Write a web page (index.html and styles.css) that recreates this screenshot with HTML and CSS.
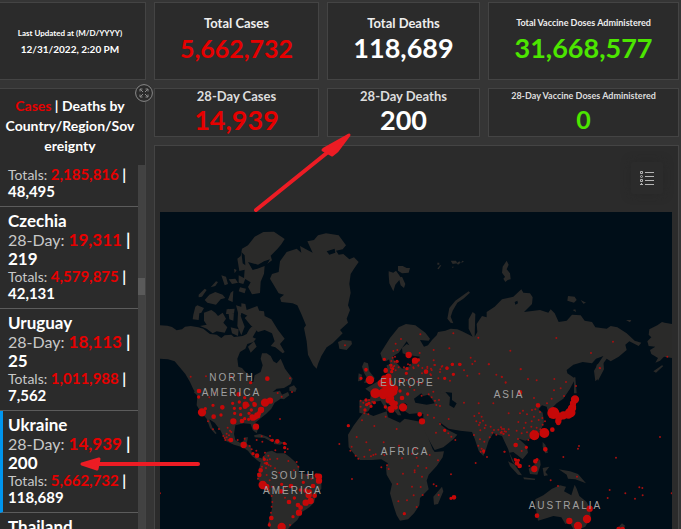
FILE: index.html
```html
<!DOCTYPE html>
<html lang="en">
<head>
<meta charset="utf-8">
<meta name="viewport" content="width=device-width, initial-scale=1">
<title>COVID-19 Dashboard</title>
<link rel="stylesheet" href="styles.css">
</head>
<body>
<main class="dashboard">
  <section class="panel updated">
    <p class="updated-label">Last Updated at (M/D/YYYY)</p>
    <p class="updated-time">12/31/2022, 2:20 PM</p>
  </section>
  <section class="panel stat">
    <h2 class="stat-label">Total Cases</h2>
    <p class="stat-value medium cases">5,662,732</p>
  </section>
  <section class="panel stat">
    <h2 class="stat-label">Total Deaths</h2>
    <p class="stat-value">118,689</p>
  </section>
  <section class="panel stat">
    <h2 class="stat-label small">Total Vaccine Doses Administered</h2>
    <p class="stat-value doses">31,668,577</p>
  </section>

  <section class="panel countries">
    <button class="expand" type="button" aria-label="Expand">
      <svg viewBox="0 0 18 18" width="18" height="18" fill="none" stroke="#8a8a8a"><circle cx="9" cy="9" r="8.4"/><path d="M5 7.500V5h2.500M5 5l3 3M10.500 5H13v2.500M13 5l-3 3M5 10.500V13h2.500M5 13l3-3M10.500 13H13v-2.500M13 13l-3-3"/></svg>
    </button>
    <h2 class="countries-title"><span class="cases">Cases</span> | Deaths by<br>Country/Region/Sov<br>ereignty</h2>
    <div class="list-area">
      <ul class="list">
        <li class="country partial"><p class="totals">Totals: <b class="cases">2,185,816</b> <b>| 48,495</b></p></li>
        <li class="country"><h3>Czechia</h3><p class="recent">28-Day: <b class="cases">19,311</b> <b>| 219</b></p><p class="totals">Totals: <b class="cases">4,579,875</b> <b>| 42,131</b></p></li>
        <li class="country"><h3>Uruguay</h3><p class="recent">28-Day: <b class="cases">18,113</b> <b>| 25</b></p><p class="totals">Totals: <b class="cases">1,011,988</b> <b>| 7,562</b></p></li>
        <li class="country selected"><h3>Ukraine</h3><p class="recent">28-Day: <b class="cases">14,939</b> <b>| 200</b></p><p class="totals">Totals: <b class="cases">5,662,732</b> <b>| 118,689</b></p></li>
        <li class="country"><h3>Thailand</h3></li>
      </ul>
      <div class="track"><div class="thumb"></div></div>
    </div>
  </section>

  <section class="panel stat compact">
    <h2 class="stat-label">28-Day Cases</h2>
    <p class="stat-value cases">14,939</p>
  </section>
  <section class="panel stat compact">
    <h2 class="stat-label">28-Day Deaths</h2>
    <p class="stat-value">200</p>
  </section>
  <section class="panel stat compact">
    <h2 class="stat-label small">28-Day Vaccine Doses Administered</h2>
    <p class="stat-value medium doses">0</p>
  </section>

  <section class="panel map-panel">
    <div class="map-tools">
      <button class="legend" type="button" aria-label="Legend">
        <svg viewBox="0 0 16 16" width="16" height="16" fill="none" stroke="#b4b4b4"><path d="M6 2.500h9M6 6.500h9M6 10.500h9M6 14.500h9"/><path d="M1.500 1.500h2v2h-2zM1.500 9.500h2v2h-2z"/><circle cx="2.500" cy="6.500" r="1"/><path d="M2.500 13v1M1 14.500h3"/></svg>
      </button>
    </div>
    <svg class="map" viewBox="0 0 1536 951" preserveAspectRatio="xMidYMin slice" role="img" aria-label="World map of cases">
      <g class="land">
        <!-- North America -->
        <path d="M0 340L22 341 36 345 50 355 66 352 75 344 92 342 115 346 130 350 142 360 150 366 170 368 184 378 194 370 214 368 222 375 248 372 260 366 268 352 274 345 284 342 289 356 278 376 288 380 280 390 262 396 256 410 240 420 232 440 235 464 246 468 256 480 270 490 272 508 280 510 284 490 302 480 308 460 302 440 306 424 320 424 332 432 340 448 350 454 362 440 370 458 375 470 385 484 398 500 392 516 372 528 350 530 338 540 360 536 366 548 384 540 388 550 372 562 362 560 344 572 334 590 318 606 300 620 286 632 294 650 290 664 278 654 272 636 250 634 226 640 222 666 226 684 240 692 250 688 254 676 264 676 260 696 272 702 276 728 290 736 304 738 312 752 298 750 288 742 276 732 264 716 248 706 222 698 196 686 182 656 164 632 148 622 158 648 170 664 166 666 150 648 140 620 122 600 110 580 112 552 100 532 90 510 76 486 66 474 44 448 24 442 0 440z"/>
        <path d="M106 534l12 8-4 8-12-8zM388 526l14-6 8 10-4 10-18-4z"/>
        <!-- Arctic islands -->
        <path d="M106 284l6-4 20 8-8 14-6 2-2 20-18-2 2-14zM132 302l22-8 12 8 8 10 14-10 10 18-8 12 12 14-8 16-24-4-12 6-18-14-20-8 20-4-8-12zM134 264l14-16 18-8 22 8 8 10-14 4-14 16-26-6zM116 248l18-18 6 4-14 20-10 2zM152 226l16-18 6 2-8 12zM184 190l14 4 6 22-10 4zM206 202l20-2 8 12-18 4zM212 242l8-6-2 34-14-6zM200 292l24-2-2 14-24 2zM204 290l18 10-2 26-12-4zM228 280l20 6-6 26 12 32-10 26-12-28 2-40zM244 274l12 2 4 18 32-12 8 20-36 10-20-10zM254 318l26-24 32 4 2 14 20 10 20 32 20 26-14 16 14 24-6 4-22-18-14-4 12-14-8-24-22-10-20 6-22-20zM212 346l24 6-2 20-18-8zM264 404l18-16 8 16-18 18z"/>
        <path d="M232 140l10-8 4-22 18-10 20-26 26-14 32-1 32 22-10 16-12 14-20 20 4 14-22 16-2 24-10 24-2 34-24 4-12-22 8-14-20-12 2-26-16 4zM236 190l20 10-6 16-14-4zM240 226l18 4-4 14-18-6zM222 170l8 4-6 10z"/>
        <!-- Greenland -->
        <path d="M330 200l6-14 20-6 4-32 20-28 30-10 14 12-4-20 18 10 20 10-16-34 20-4 12-14 24-6 38 6 22 30-10 12-20 4 8 12 14-2 18 16 14-6 14 14-14 20-10 16-4 30 4 26-8 38 6 14-10 26 4 12-24 22 8 10-30 30-18 12-16 26-10 24-4 14-10-10-16-32-4-40-8-40 6-8-14-34-12-26-14-6-34-4-4-12 12-10-16-4z"/>
        <path d="M534 390l14-6 26 2 2 10-16 18-22-4-2-12z"/>
        <!-- Caribbean -->
        <path d="M282 670l18-4 22 8 18 12-8 2-18-10-30-2zM342 688l14-2 16 6-12 6-18-2z"/>
        <!-- South America -->
        <path d="M304 742L320 720 336 716 350 724 374 724 390 736 406 750 418 766 416 782 440 786 464 796 484 810 484 830 468 850 462 872 448 886 426 900 412 924 396 938 384 951 330 951 326 930 336 890 334 852 310 832 292 796 296 776z"/>
        <!-- Svalbard and Arctic Russia -->
        <path d="M686 178l14 4 8-6 14 20 4-2 10 22-4 12-10-8-4-16-12 14-6 20-12-24-2-24zM714 162l14 0 12 6 10 0-4 14-20 2-12-8zM832 170l8-10 4 0-8 12zM832 152h6v6h-6zM872 146l16 0 4 8-14 2zM876 164l6 0-4 5zM890 154l8-6 4 4-8 6zM906 146l6 2-8 6z"/>
        <path d="M926 238l4 4-20 18-18 12-14 24-6 18 8 20-8-2-10-12 6-32 18-22zM1028 164l12-18 6 12-6 14 10 12 2 18-10 2-16-22zM1030 200l10-10 6 12-10 8zM1224 252l20 2 6 10-8 8-20-6zM1262 264l16 8-8 3zM1238 294l8-2 2 8zM1398 324h16l-4 7z"/>
        <!-- Eurasia -->
        <path d="M661 424L690 378 716 346 738 336 766 340 796 362 810 380 806 386 780 384 792 404 804 400 816 384 830 370 834 360 856 356 872 350 892 352 906 358 930 370 938 374 926 350 926 322 938 300 946 306 944 374 952 360 950 336 966 312 980 316 980 300 1004 284 1026 262 1060 254 1084 232 1090 242 1110 244 1118 256 1116 276 1092 300 1140 294 1165 302 1172 292 1184 304 1196 330 1220 326 1236 308 1262 310 1274 326 1296 330 1306 346 1340 350 1352 342 1372 346 1400 364 1424 386 1444 392 1436 402 1408 388 1396 398 1400 414 1376 434 1352 448 1340 440 1318 470 1314 500 1306 508 1302 476 1314 456 1330 432 1308 440 1296 454 1268 450 1240 458 1220 474 1222 484 1246 500 1230 530 1210 560 1190 574 1178 586 1180 614 1168 612 1160 584 1146 580 1136 592 1148 602 1152 630 1142 656 1120 676 1096 686 1076 680 1100 702 1104 722 1088 742 1060 720 1048 722 1070 766 1056 748 1044 710 1036 694 1026 672 1000 664 986 686 978 712 970 732 956 716 944 680 936 660 900 656 866 650 838 630 844 640 860 652 892 668 880 682 850 706 824 714 808 686 790 656 782 640 790 628 790 606 772 604 748 606 730 594 742 578 734 572 716 594 724 610 714 610 690 580 676 572 690 596 694 598 680 596 662 566 640 570 626 596 612 606 598 602 598 566 630 562 634 544 616 530 650 510 676 496 682 484 680 460 690 456 686 436 696 428 702 444 726 470 752 462 760 444 776 440 780 434 740 428 728 424 726 408 740 396 748 400 740 388 716 422 706 428 690 440 678 448 668 446z"/>
        <path d="M606 464l6-14 12 4 4 24 16 20-6 14-26 0 8-16-8-14zM596 484l10 4-2 18-10 2z"/>
        <!-- Africa -->
        <path d="M612 600L640 612 680 598 684 616 720 632 734 620 784 630 792 652 804 676 818 712 824 720 852 718 848 736 830 762 806 788 800 806 806 832 780 858 778 880 762 904 744 922 720 926 710 910 700 880 690 844 696 816 680 788 678 766 684 754 664 742 636 744 600 744 584 728 566 706 564 668 580 642 596 620zM846 824l4 14-16 38-12 2-2-24z"/>
        <!-- Southeast Asia and Japan -->
        <path d="M1044 748l20 10 22 32-12-2-24-26zM1106 770l20-14 14-14 2 16-10 30-22-2zM1090 796l36 4-2 4-32-2zM1148 768l20-4-12 16 8 10-12 2zM1148 690l8 8 8 24-8 2-8-20zM1196 772l34 6 24 8 24 28-16-6-16-6-22-2-4-12zM1242 496h4l4 48h-8zM1310 458l20-10 2 24-18 34-8-20z"/>
        <path d="M1180 606l20-2 22-10 12-26 14-6-4 34-20 16-44 8zM840 536l14 2 2 6-14 2z"/>
        <!-- Australia -->
        <path d="M1126 880L1126 862 1150 850 1176 830 1200 820 1218 824 1212 838 1234 850 1244 818 1250 830 1258 852 1280 870 1290 890 1292 916 1276 944 1260 951 1240 951 1230 934 1216 936 1204 916 1180 912 1154 920 1134 926zM1386 934l10 8-10 9h-16z"/>
        <!-- Alaska edge -->
        <path d="M1536 336L1514 332 1506 330 1492 340 1468 352 1466 368 1474 376 1462 388 1466 402 1486 404 1470 414 1474 426 1494 438 1486 452 1500 446 1512 434 1536 438zM1480 478l26-18 4 2-22 20z"/>
      </g>
      <g class="water">
        <path d="M762 560l22-16 6 8 14-4 10 10 10 16-24 4-34-6zM856 540l20 2 0 22 14 10-8 14-14-8 2-24zM1064 270l8-4 2 8-8 4zM264 150l30 8 18-10 18-6-10 18-28 10-14 4zM244 120l10 10 2 30-8-6zM500 118l24-8 2 12-18 6z"/>
      </g>
      <g class="dots" transform="translate(-15 444)">
        <path class="d1" d="M107 50h0M153 49h0M230 50h0M163 112h0M159 184h0M174 208h0M192 207h0M218 203h0M229 216h0M205 228h0M215 232h0M222 226h0M211 240h0M248 240h0M269 236h0M180 99h0M284 258h0M290 268h0M304 272h0M305 240h0M320 229h0M345 228h0M322 245h0M347 241h0M368 99h0M380 110h0M411 96h0M405 55h0M375 177h0M393 252h0M398 267h0M390 276h0M361 271h0M367 296h0M330 278h0M340 287h0M326 292h0M337 300h0M345 298h0M329 310h0M341 315h0M321 320h0M333 324h0M347 318h0M360 325h0M373 338h0M400 303h0M425 306h0M430 320h0M417 331h0M469 356h0M457 345h0M310 341h0M309 356h0M335 345h0M344 361h0M351 380h0M343 391h0M350 408h0M352 426h0M350 440h0M348 458h0M391 382h0M390 413h0M420 414h0M405 495h0M343 490h0M15 400h0M225 212h0M215 221h0M209 234h0M220 240h0"/>
        <path class="d2" d="M131 111h0M174 136h0M198 165h0M233 130h0M253 126h0M238 145h0M239 160h0M256 145h0M257 164h0M269 113h0M282 160h0M289 150h0M269 176h0M281 178h0M151 146h0M297 130h0M287 68h0M279 136h0M294 281h0M352 241h0M388 250h0M389 263h0M380 373h0M445 367h0M436 390h0M418 414h0M414 470h0M328 298h0M335 310h0M343 495h0"/>
        <path class="d3" d="M132 93h0M202 142h0M176 170h0M337 56h0M251 103h0M290 118h0M299 134h0M261 183h0M290 170h0M302 172h0M312 160h0M320 148h0M228 240h0M367 244h0M306 287h0M317 331h0M313 345h0M408 378h0M379 394h0M402 426h0M429 435h0M437 443h0M349 474h0M479 407h0M474 378h0M452 392h0M464 395h0M485 347h0M270 140h0M346 121h0"/>
        <path class="d4" d="M303 200h0M266 255h0M272 134h0M235 184h0M294 173h0M307 166h0M318 150h0M324 373h0M334 381h0M461 405h0M452 428h0M467 423h0M432 458h0M492 350h0M492 362h0M345 122h0"/>
        <path class="d5" d="M141 157h0M330 128h0M323 375h0M380 501h0"/>
      </g>
      <g class="dots" transform="translate(510 -21)">
        <path class="d1" d="M45 421h0M197 416h0M213 402h0M190 438h0M202 435h0M195 455h0M188 458h0M184 468h0M194 470h0M271 388h0M269 444h0M311 435h0M311 466h0M358 430h0M370 385h0M445 398h0M422 458h0M427 477h0M477 478h0M315 480h0M337 483h0M292 485h0M265 481h0M250 487h0M206 487h0M234 478h0M277 489h0M303 491h0M182 489h0M193 483h0M331 493h0"/>
        <path class="d2" d="M163 463h0M183 481h0M201 469h0M188 491h0M367 478h0M390 478h0M351 489h0M231 491h0M108 493h0M167 493h0M265 465h0"/>
        <path class="d4" d="M236 450h0M255 467h0"/>
      </g>
      <g class="dots" transform="translate(510 444)">
        <path class="d1" d="M180 15h0M190 20h0M186 32h0M197 31h0M203 5h0M222 22h0M240 15h0M251 25h0M265 17h0M276 40h0M292 24h0M303 45h0M313 15h0M325 55h0M335 20h0M330 36h0M305 30h0M301 43h0M360 62h0M372 43h0M402 31h0M412 47h0M435 4h0M448 41h0M476 13h0M499 44h0M516 51h0M527 68h0M230 60h0M247 55h0M262 65h0M275 70h0M240 80h0M253 90h0M275 107h0M296 103h0M310 95h0M305 112h0M315 122h0M327 120h0M319 135h0M330 138h0M402 128h0M446 130h0M490 130h0M92 122h0M92 140h0M100 128h0M117 120h0M127 125h0M103 160h0M115 163h0M167 170h0M133 198h0M96 181h0M200 207h0M80 231h0M109 247h0M161 247h0M65 260h0M61 272h0M77 287h0M85 296h0M103 290h0M119 270h0M123 289h0M130 285h0M137 283h0M163 285h0M207 257h0M256 266h0M216 295h0M246 281h0M260 293h0M299 285h0M324 301h0M171 316h0M176 327h0M154 322h0M219 341h0M254 331h0M254 337h0M264 318h0M289 324h0M276 350h0M202 372h0M246 380h0M272 381h0M251 406h0M278 405h0M231 421h0M205 424h0M260 441h0M326 405h0M311 373h0M319 378h0M363 343h0M28 252h0M66 357h0M312 173h0M293 165h0M330 192h0M356 177h0M318 218h0M345 212h0M364 230h0M355 220h0M376 240h0M433 168h0M447 160h0M455 170h0M439 184h0M450 188h0M459 182h0M447 195h0M432 225h0M451 211h0M464 204h0M467 196h0M450 238h0M463 245h0M445 257h0M455 266h0M461 278h0M452 275h0M471 291h0M437 309h0M479 232h0M487 218h0M499 224h0M505 209h0M516 207h0M524 214h0M536 208h0M524 275h0M515 218h0M520 222h0M482 200h0M492 210h0"/>
        <path class="d2" d="M108 30h0M93 55h0M108 120h0M133 128h0M123 139h0M105 150h0M117 130h0M55 197h0M166 141h0M210 93h0M233 102h0M229 40h0M351 25h0M370 43h0M367 13h0M389 13h0M344 55h0M344 211h0M363 415h0M223 461h0M461 273h0M210 64h0M110 134h0M185 35h0"/>
        <path class="d3" d="M167 32h0M288 35h0M269 163h0M372 412h0M216 114h0M197 130h0M180 145h0M197 142h0M189 137h0M255 3h0"/>
        <path class="d4" d="M276 184h0M184 149h0M195 85h0M176 120h0M187 128h0M175 50h0M183 115h0M163 55h0"/>
        <path class="d5" d="M120 60h0M219 142h0M155 70h0M170 60h0M180 80h0M160 105h0M178 110h0M190 95h0M170 85h0M175 68h0"/>
        <path class="d6" d="M136 100h0M160 100h0M180 98h0"/>
      </g>
      <g class="dots" transform="translate(1020 -21)">
        <path class="d1" d="M31 437h0M169 399h0M339 410h0M273 444h0M299 489h0M502 455h0M62 492h0"/>
      </g>
      <g class="dots" transform="translate(1020 444)">
        <path class="d1" d="M5 50h0M17 67h0M84 57h0M110 61h0M163 57h0M198 66h0M228 78h0M162 91h0M182 85h0M192 108h0M155 116h0M141 130h0M102 114h0M26 160h0M60 160h0M69 152h0M81 163h0M96 150h0M106 148h0M120 156h0M102 170h0M116 180h0M127 174h0M135 184h0M95 184h0M77 188h0M55 186h0M72 204h0M94 200h0M110 203h0M128 194h0M50 212h0M65 220h0M81 217h0M100 212h0M121 208h0M27 226h0M54 237h0M85 240h0M3 202h0M12 207h0M5 215h0M18 215h0M11 221h0M2 218h0M13 275h0M65 273h0M300 25h0M62 28h0M237 258h0M234 266h0M348 293h0M480 231h0M190 291h0M152 361h0M174 378h0M231 350h0M329 390h0M323 414h0M376 400h0M405 416h0M418 382h0M427 384h0M428 406h0M515 400h0M88 318h0M44 297h0"/>
        <path class="d2" d="M79 262h0M47 300h0M55 301h0M111 299h0"/>
        <path class="d3" d="M60 97h0M114 136h0M47 255h0M157 209h0M51 310h0M59 318h0M106 304h0M136 268h0M111 467h0M356 507h0M368 507h0M175 189h0"/>
        <path class="d4" d="M103 327h0M269 446h0M208 483h0M219 130h0M219 140h0M175 183h0"/>
        <path class="d5" d="M225 118h0M261 477h0M234 498h0M216 145h0M214 158h0M205 164h0M190 166h0M178 170h0"/>
        <path class="d6" d="M103 226h0M133 219h0M210 158h0"/>
        <path class="d7" d="M160 159h0"/>
      </g>
      <g class="labels">
        <text x="148" y="506">NORTH</text><text x="125" y="551">AMERICA</text>
        <text x="661" y="523">EUROPE</text><text x="1001" y="558">ASIA</text>
        <text x="662" y="729">AFRICA</text>
        <text x="333" y="801">SOUTH</text><text x="309" y="846">AMERICA</text>
        <text x="1106" y="890">AUSTRALIA</text>
      </g>
    </svg>
  </section>
</main>
<svg class="arrow arrow-deaths" viewBox="0 0 102 82" width="102" height="82" aria-hidden="true"><path d="M4 78L76 20" stroke-width="4"/><path class="tip" d="M97 3L72 17 71 18 80 23 85 19z" stroke-width="3"/></svg>
<svg class="arrow arrow-ukraine" viewBox="0 0 124 16" width="124" height="16" aria-hidden="true"><path d="M16 8H120" stroke-width="4"/><path class="tip" d="M4 8L21 3 19 13z" stroke-width="3"/></svg>
</body>
</html>
```
FILE: styles.css
```css
* { box-sizing: border-box; }
body {
  margin: 0;
  background: #353535;
  color: #fff;
  font-family: Lato, "Liberation Sans", sans-serif;
  overflow: hidden;
}
h2, h3, p, ul { margin: 0; padding: 0; font-weight: inherit; }
button { padding: 0; border: 0; background: none; }

.dashboard {
  display: grid;
  grid-template-columns: 146fr 165fr 153fr 191fr;
  grid-template-rows: auto auto minmax(0, 1fr);
  gap: 8px;
  height: 100vh;
  padding: 2px 2px 0 0;
}
.panel { min-width: 0; background: #2b2b2b; border: 1px solid #444; }

.updated {
  display: flex;
  flex-direction: column;
  justify-content: center;
  padding-right: 5px;
  border-left: 0;
  text-align: center;
  font-weight: 700;
}
.updated-label { font-size: 8px; line-height: 16px; }
.updated-time { font-size: 10px; line-height: 16px; }

.stat { padding: 12px 0 14px; text-align: center; }
.stat-label { font-size: 13px; line-height: 16px; font-weight: 700; color: #eee; }
.stat-label.small { font-size: 9px; }
.stat-value { font-size: 27px; line-height: 34px; font-weight: 700; }
.stat-value.medium { font-size: 25px; }
.compact { padding: 0; }
.compact .stat-label { line-height: 14px; color: #ddd; }
.compact .stat-value { line-height: 33px; }
.cases { color: #e60000; }
.doses { color: #4ce600; }

.countries {
  position: relative;
  grid-row: 2 / 4;
  display: flex;
  flex-direction: column;
  border-left: 0;
  border-bottom: 0;
}
.expand { position: absolute; top: -5px; right: -8px; width: 18px; height: 18px; border-radius: 50%; background: #2b2b2b; }
.expand svg { display: block; }
.countries-title {
  padding: 7px 5px 9px 0;
  font-size: 14px;
  line-height: 20px;
  font-weight: 700;
  text-align: center;
}
.list-area { display: flex; flex: 1; min-height: 0; }
.list { flex: 1; list-style: none; overflow: hidden; }
.track { position: relative; width: 7px; background: #424242; }
.thumb { position: absolute; top: 31%; width: 100%; height: 17px; background: #5a5a5a; }
.country { padding: 4px 0 6px 8px; border-bottom: 1px solid #5c5c5c; color: #c8c8c8; }
.country.partial { padding-top: 1px; }
.country.selected { padding-left: 5px; border-left: 3px solid #0095ee; }
.country h3 { font-size: 17px; line-height: 19px; font-weight: 700; color: #fff; }
.country b { color: #fff; font-weight: 700; }
.country b.cases { color: #e60000; }
.recent { font-size: 16px; line-height: 19px; }
.recent b { font-size: 17px; line-height: 1; }
.totals { font-size: 14px; line-height: 17px; }
.totals b { font-size: 15px; line-height: 1; }

.map-panel {
  grid-column: 2 / 5;
  display: flex;
  flex-direction: column;
  padding: 0 6px 0 5px;
  border-bottom: 0;
}
.map-tools { display: flex; justify-content: flex-end; padding: 16px 9px 18px; }
.legend { display: grid; place-items: center; width: 32px; height: 32px; border-radius: 2px; box-shadow: 0 0 10px #272727; }
.map { flex: 1; width: 100%; min-height: 0; background: #000e18; }
.land { fill: #2a2a29; }
.water { fill: #000e18; }
.dots { fill: none; stroke: #c60808; stroke-linecap: round; }
.d1 { stroke: #a51010; stroke-width: 6px; }
.d2 { stroke-width: 10px; }
.d3 { stroke-width: 14px; }
.d4 { stroke-width: 19px; }
.d5 { stroke-width: 25px; }
.d6 { stroke-width: 30px; }
.d7 { stroke-width: 36px; }
.labels {
  fill: #a0a0a0;
  font-family: "Liberation Sans", sans-serif;
  font-size: 30px;
  letter-spacing: 6px;
}

.arrow { position: absolute; fill: none; stroke: #ed1c24; stroke-linecap: round; stroke-linejoin: round; }
.arrow .tip { fill: #ed1c24; }
.arrow-deaths { left: 252px; top: 132px; }
.arrow-ukraine { left: 78px; top: 456px; }
```
